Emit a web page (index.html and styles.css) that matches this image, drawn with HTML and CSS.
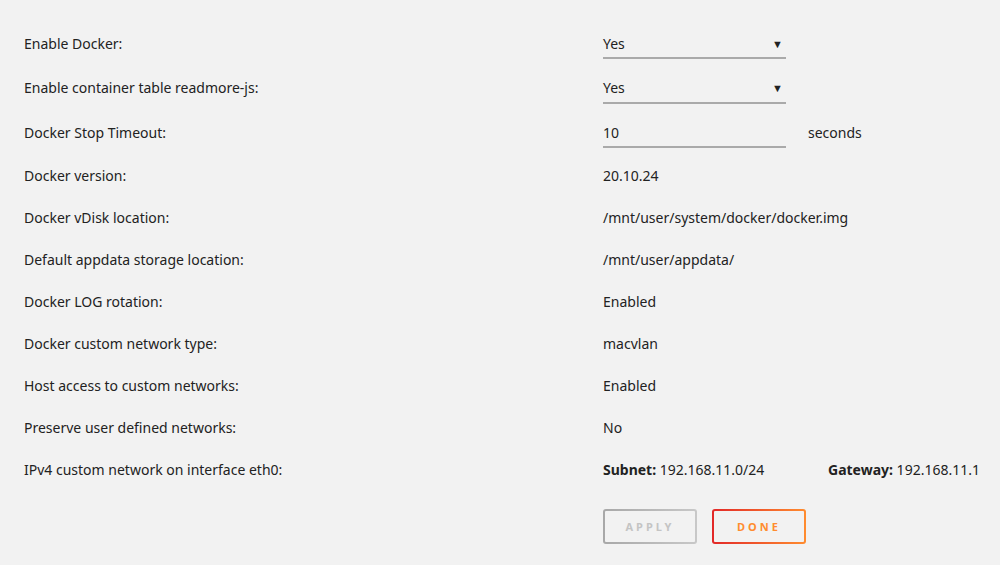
FILE: index.html
```html
<!DOCTYPE html>
<html>
<head lang="en">
    <meta charset="UTF-8">
    <title>Docker Settings</title>
    <link rel="stylesheet" href="styles.css">
</head>
<body>
    <div id="settings">
        <div class="row tall">
            <span class="label">Enable Docker:</span>
            <div class="value"><div class="select"><span>Yes</span><span class="arrow">&#9660;</span></div></div>
        </div>
        <div class="row tall">
            <span class="label">Enable container table readmore-js:</span>
            <div class="value"><div class="select"><span>Yes</span><span class="arrow">&#9660;</span></div></div>
        </div>
        <div class="row tall">
            <span class="label">Docker Stop Timeout:</span>
            <div class="value"><div class="select"><span>10</span></div><span class="unit">seconds</span></div>
        </div>
        <div class="row">
            <span class="label">Docker version:</span>
            <div class="value">20.10.24</div>
        </div>
        <div class="row">
            <span class="label">Docker vDisk location:</span>
            <div class="value">/mnt/user/system/docker/docker.img</div>
        </div>
        <div class="row">
            <span class="label">Default appdata storage location:</span>
            <div class="value">/mnt/user/appdata/</div>
        </div>
        <div class="row">
            <span class="label">Docker LOG rotation:</span>
            <div class="value">Enabled</div>
        </div>
        <div class="row">
            <span class="label">Docker custom network type:</span>
            <div class="value">macvlan</div>
        </div>
        <div class="row">
            <span class="label">Host access to custom networks:</span>
            <div class="value">Enabled</div>
        </div>
        <div class="row">
            <span class="label">Preserve user defined networks:</span>
            <div class="value">No</div>
        </div>
        <div class="row">
            <span class="label">IPv4 custom network on interface eth0:</span>
            <div class="value">
                <span class="net"><b>Subnet:</b> 192.168.11.0/24</span>
                <span><b>Gateway:</b> 192.168.11.1</span>
            </div>
        </div>
        <div class="buttons">
            <span class="button apply">APPLY</span>
            <span class="button done">DONE</span>
        </div>
    </div>
</body>
</html>
```

FILE: styles.css
```css
*{padding:0;margin:0;box-sizing:border-box}
body{background:#f2f2f2;color:#222;font-family:"Noto Sans","Open Sans",sans-serif;font-size:14px}
#settings{padding:21px 0 0 24px}
.row{display:flex;align-items:center;height:42px}
.row.tall{height:44px}
.row.tall:nth-child(2){height:45px}
.label{width:579px}
.value{display:flex;align-items:center}
.select{width:183px;height:32px;border-bottom:2px solid #aaa;display:flex;justify-content:space-between;align-items:center;padding-top:2px}
.select .arrow{font-size:11px;padding-right:3px}
.unit{margin-left:22px}
.net{width:225px}
b{font-weight:bold}
.buttons{display:flex;gap:15px;margin:19px 0 0 579px}
.button{display:block;width:94px;height:35px;line-height:31px;text-align:center;font-size:11px;font-weight:bold;letter-spacing:3px;border:2px solid transparent;border-radius:3px}
.apply{color:#c4c4c4;background:linear-gradient(#f2f2f2,#f2f2f2) padding-box,linear-gradient(90deg,#a8a8a8,#c8c8c8) border-box}
.done{color:#ff8c2f;background:linear-gradient(#f2f2f2,#f2f2f2) padding-box,linear-gradient(90deg,#e22828,#ff8c2f) border-box}
```
